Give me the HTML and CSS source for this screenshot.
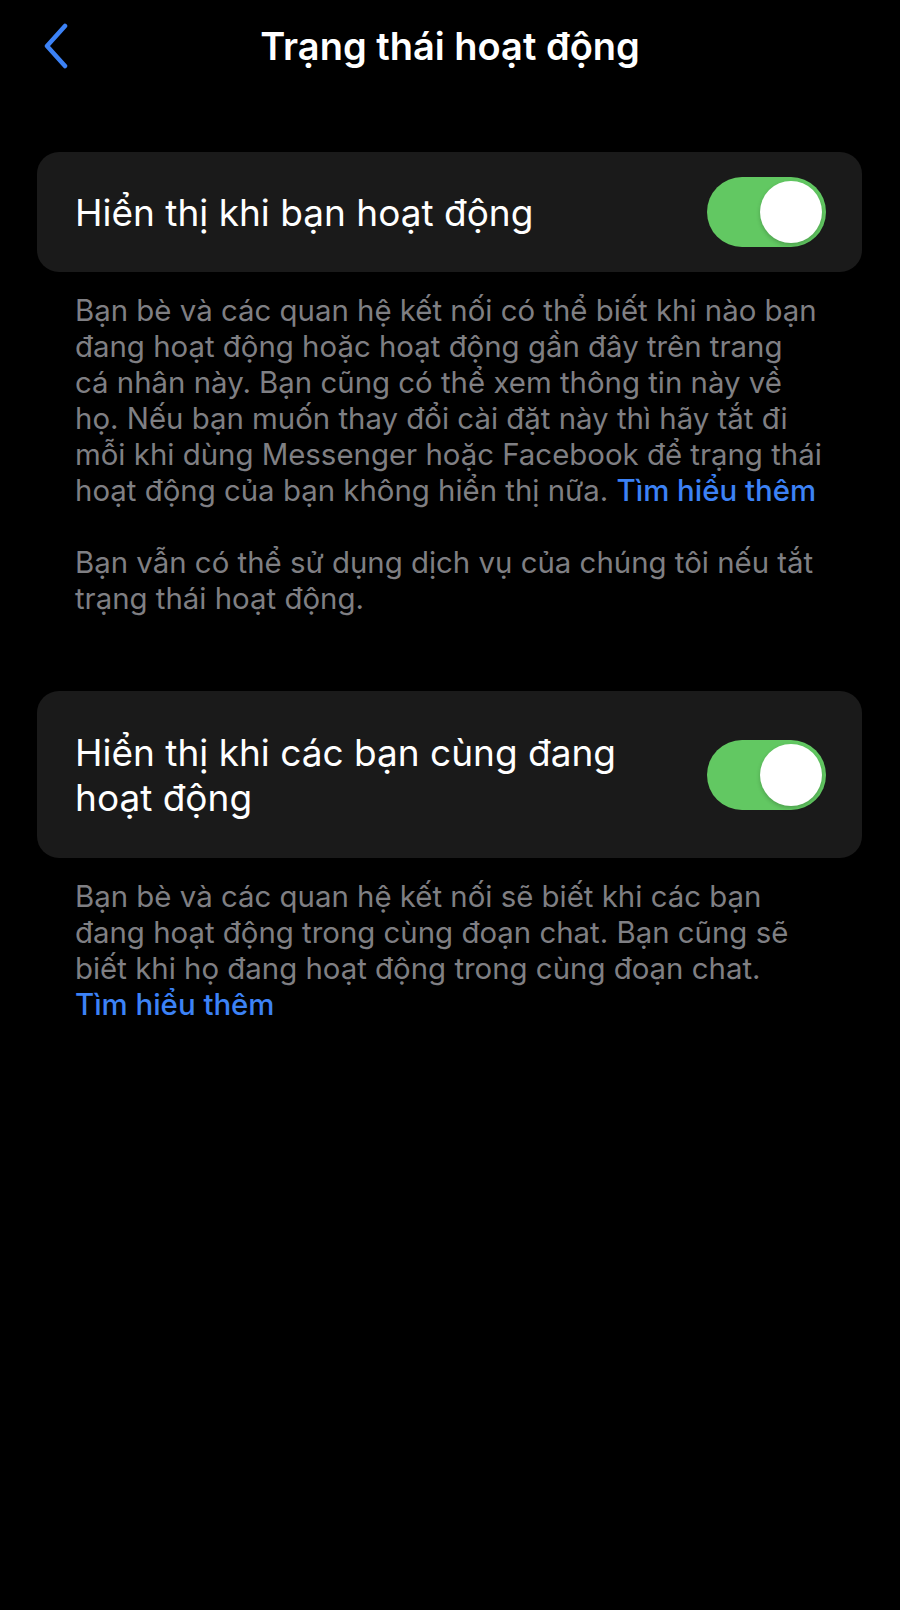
FILE: index.html
```html
<!DOCTYPE html>
<html lang="vi">
<head>
  <meta charset="UTF-8" />
  <meta name="viewport" content="width=device-width, initial-scale=1.0" />
  <title>Trạng thái hoạt động</title>
  <link rel="stylesheet" href="styles.css">
</head>
<body>
  <header class="navbar">
    <a class="back" href="#">
      <svg width="30" height="46" viewBox="0 0 30 46">
        <path d="M25 3 L7 23 L25 43" fill="none" stroke="#3c82f6" stroke-width="4.5" stroke-linecap="round" stroke-linejoin="round" />
      </svg>
    </a>
    <h1>Trạng thái hoạt động</h1>
    <span></span>
  </header>

  <main class="content">
    <div class="card">
      <span class="card-label">Hiển thị khi bạn hoạt động</span>
      <label class="toggle on"><span class="knob"></span></label>
    </div>
    <p class="note">
      Bạn bè và các quan hệ kết nối có thể biết khi nào bạn<br>
      đang hoạt động hoặc hoạt động gần đây trên trang<br>
      cá nhân này. Bạn cũng có thể xem thông tin này về<br>
      họ. Nếu bạn muốn thay đổi cài đặt này thì hãy tắt đi<br>
      mỗi khi dùng Messenger hoặc Facebook để trạng thái<br>
      hoạt động của bạn không hiển thị nữa. <a href="#">Tìm hiểu thêm</a><br>
      <br>
      Bạn vẫn có thể sử dụng dịch vụ của chúng tôi nếu tắt<br>
      trạng thái hoạt động.
    </p>

    <div class="card card-tall">
      <span class="card-label">Hiển thị khi các bạn cùng đang<br>hoạt động</span>
      <label class="toggle on"><span class="knob"></span></label>
    </div>
    <p class="note">
      Bạn bè và các quan hệ kết nối sẽ biết khi các bạn<br>
      đang hoạt động trong cùng đoạn chat. Bạn cũng sẽ<br>
      biết khi họ đang hoạt động trong cùng đoạn chat.<br>
      <a href="#">Tìm hiểu thêm</a>
    </p>
  </main>
</body>
</html>
```

FILE: styles.css
```css
* {
  box-sizing: border-box;
  margin: 0;
  padding: 0;
}

body {
  background-color: #000;
  color: #fff;
  font-family: Inter, "Noto Sans", sans-serif;
}

.navbar {
  height: 92px;
  display: grid;
  grid-template-columns: 1fr auto 1fr;
  align-items: center;
}

.back {
  display: flex;
  align-items: center;
  padding-left: 40px;
}

.navbar h1 {
  font-size: 38px;
  font-weight: 600;
}

.content {
  padding: 60px 38px 0 37px;
}

.card {
  background-color: #1a1a1a;
  border-radius: 22px;
  padding: 25px 36px 25px 38px;
  display: flex;
  align-items: center;
  justify-content: space-between;
}

.card-tall {
  padding-top: 39px;
  padding-bottom: 38px;
}

.card-label {
  font-size: 37px;
  line-height: 45px;
}

.toggle {
  width: 119px;
  height: 70px;
  border-radius: 35px;
  background-color: #3a3a3c;
  padding: 4px;
  display: flex;
  flex-shrink: 0;
}

.toggle.on {
  background-color: #62c862;
  justify-content: flex-end;
}

.knob {
  width: 62px;
  height: 62px;
  border-radius: 50%;
  background-color: #fff;
  box-shadow: 0 2px 4px rgba(0,0,0,0.2);
}

.note {
  padding: 21px 38px 74px 38px;
  font-size: 29.4px;
  line-height: 36px;
  color: #7f7f83;
}

.note a {
  color: #3c82f6;
  text-decoration: none;
  font-weight: 550;
}
```
